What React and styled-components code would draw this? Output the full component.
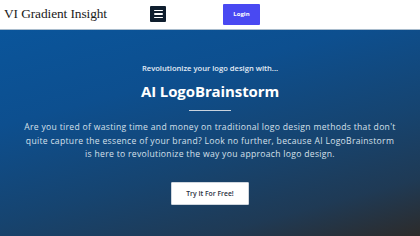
import React from "react";
import styled, { createGlobalStyle } from "styled-components";

const Global = createGlobalStyle`
  html, body { margin: 0; padding: 0; }
  body { width: 420px; height: 236px; overflow: hidden; background: #fff; }
  * { box-sizing: border-box; }
`;

const Page = styled.div`
  width: 420px;
  height: 236px;
  display: flex;
  flex-direction: column;
`;

const Header = styled.header`
  height: 30px;
  flex: none;
  display: flex;
  align-items: center;
  padding: 0 0 1px 4px;
  background: #fff;
  border-bottom: 1px solid #a9bccd;
`;

const Logo = styled.div`
  width: 146px;
  font-family: "Liberation Serif", serif;
  font-size: 13.4px;
  color: #1a1a1a;
  letter-spacing: -0.1px;
`;

const MenuButton = styled.button`
  width: 16px;
  height: 16px;
  padding: 0;
  border: none;
  border-radius: 1px;
  background: #0f1e2e;
  display: flex;
  flex-direction: column;
  align-items: center;
  justify-content: center;
  gap: 2px;
`;

const Bar = styled.span`
  display: block;
  width: 9px;
  height: 1.6px;
  background: #fff;
  border-radius: 1px;
`;

const LoginButton = styled.button`
  margin-left: 57px;
  width: 37px;
  height: 21px;
  border: none;
  border-radius: 1px;
  background: #4949f2;
  color: #fff;
  font-family: "Open Sans", sans-serif;
  font-weight: 700;
  font-size: 6px;
  padding: 0;
`;

const Hero = styled.section`
  flex: 1;
  display: flex;
  flex-direction: column;
  align-items: center;
  padding-top: 32px;
  background: linear-gradient(165deg, #0a559b 0%, #0d4f8f 30%, #164470 60%, #1f3a55 82%, #2d2b2a 100%);
  color: #fff;
  text-align: center;
`;

const Kicker = styled.div`
  font-family: "Open Sans", sans-serif;
  font-weight: 600;
  font-size: 7.6px;
  line-height: 12px;
  color: #e3ecf6;
`;

const Title = styled.h1`
  margin: 6px 0 0;
  font-family: "Open Sans", sans-serif;
  font-weight: 700;
  font-size: 15px;
  line-height: 22px;
  letter-spacing: -0.1px;
  color: #fff;
`;

const Divider = styled.div`
  width: 42px;
  height: 1px;
  margin-top: 8px;
  background: #c9d3de;
`;

const Text = styled.p`
  margin: 10px 0 0;
  width: 400px;
  font-family: "Open Sans", sans-serif;
  font-size: 8.6px;
  line-height: 13.5px;
  color: #d6e0eb;
  letter-spacing: 0.3px;
  white-space: nowrap;
`;

const TryButton = styled.button`
  margin-top: 20px;
  width: 78px;
  height: 23px;
  border: 1px solid #cfd6de;
  border-radius: 1px;
  background: #fff;
  color: #1f2d3d;
  font-family: "Open Sans", sans-serif;
  font-weight: 600;
  font-size: 6.8px;
  padding: 0;
`;

export default function App() {
  return (
    <>
      <Global />
      <Page>
        <Header>
          <Logo>VI Gradient Insight</Logo>
          <MenuButton aria-label="menu">
            <Bar />
            <Bar />
            <Bar />
          </MenuButton>
          <LoginButton>Login</LoginButton>
        </Header>
        <Hero>
          <Kicker>Revolutionize your logo design with...</Kicker>
          <Title>AI LogoBrainstorm</Title>
          <Divider />
          <Text>
            Are you tired of wasting time and money on traditional logo design methods that don't
            <br />
            quite capture the essence of your brand? Look no further, because AI LogoBrainstorm
            <br />
            is here to revolutionize the way you approach logo design.
          </Text>
          <TryButton>Try It For Free!</TryButton>
        </Hero>
      </Page>
    </>
  );
}
